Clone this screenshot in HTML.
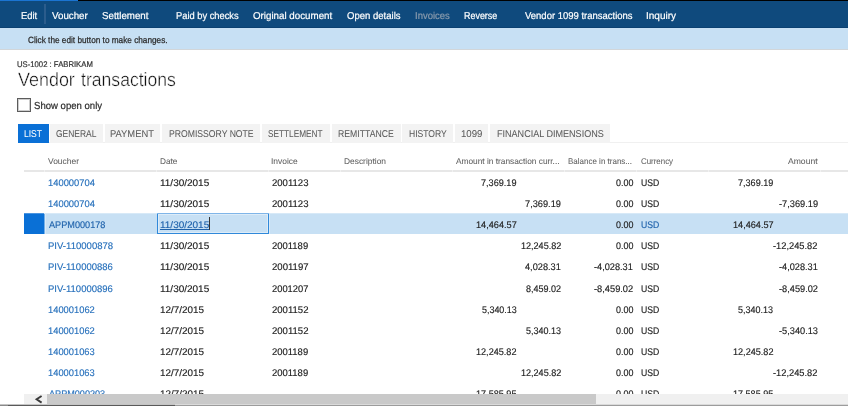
<!DOCTYPE html><html><head><meta charset="utf-8"><title>Vendor transactions</title><style>
html,body{margin:0;padding:0;background:#fff;}
body{width:848px;height:406px;position:relative;overflow:hidden;font-family:"Liberation Sans", sans-serif;}
.t{position:absolute;white-space:pre;line-height:14px;font-family:"Liberation Sans", sans-serif;text-rendering:geometricPrecision;transform-origin:0 0;}
.b{position:absolute;}

</style></head><body>
<div class="b" style="left:0;top:0;width:848px;height:28px;background:#0f4a7d"></div>
<div class="b" style="left:0;top:0;width:77.5px;height:1px;background:#1b74d1"></div>
<div class="b" style="left:77.5px;top:0;width:770.5px;height:1px;background:#000"></div>
<div class="b" style="left:44px;top:4px;width:2px;height:20px;background:#2b5c8c"></div>
<div class="b" style="left:0;top:27px;width:848px;height:1px;background:#0b4172"></div>
<div class="b" style="left:0;top:28px;width:848px;height:21px;background:#c7e0f4"></div>
<div class="b" style="left:0;top:48.8px;width:848px;height:1px;background:#d2d6d9"></div>
<div class="b" style="left:17px;top:98px;width:12px;height:12px;border:1px solid #5c5c5c;box-shadow:inset 0 0 0 1px rgba(90,90,90,.3);background:#fff"></div>
<div class="b" style="left:18px;top:142px;width:830px;height:1px;background:#f0f0f0"></div>
<div class="b" style="left:18px;top:123.7px;width:30.50px;height:19.4px;background:#0a70d6"></div>
<div class="b" style="left:50.2px;top:123.7px;width:52.80px;height:19.4px;background:#f3f3f3"></div>
<div class="b" style="left:104.8px;top:123.7px;width:55.20px;height:19.4px;background:#f3f3f3"></div>
<div class="b" style="left:161.75px;top:123.7px;width:97.75px;height:19.4px;background:#f3f3f3"></div>
<div class="b" style="left:261.5px;top:123.7px;width:68.25px;height:19.4px;background:#f3f3f3"></div>
<div class="b" style="left:331.5px;top:123.7px;width:69.00px;height:19.4px;background:#f3f3f3"></div>
<div class="b" style="left:402.25px;top:123.7px;width:50.25px;height:19.4px;background:#f3f3f3"></div>
<div class="b" style="left:454.5px;top:123.7px;width:33.75px;height:19.4px;background:#f3f3f3"></div>
<div class="b" style="left:490px;top:123.7px;width:120.00px;height:19.4px;background:#f3f3f3"></div>
<div class="b" style="left:24px;top:170px;width:824px;height:2px;background:#e7e7e7"></div>
<div class="b" style="left:44.0px;top:170px;width:1px;height:2px;background:#f1f1f1"></div>
<div class="b" style="left:156.0px;top:170px;width:1px;height:2px;background:#f1f1f1"></div>
<div class="b" style="left:268.0px;top:170px;width:1px;height:2px;background:#f1f1f1"></div>
<div class="b" style="left:340.0px;top:170px;width:1px;height:2px;background:#f1f1f1"></div>
<div class="b" style="left:452.0px;top:170px;width:1px;height:2px;background:#f1f1f1"></div>
<div class="b" style="left:564.0px;top:170px;width:1px;height:2px;background:#f1f1f1"></div>
<div class="b" style="left:636.0px;top:170px;width:1px;height:2px;background:#f1f1f1"></div>
<div class="b" style="left:708.0px;top:170px;width:1px;height:2px;background:#f1f1f1"></div>
<div class="b" style="left:820.0px;top:170px;width:1px;height:2px;background:#f1f1f1"></div>
<div class="b" style="left:24px;top:213px;width:824px;height:1px;background:#d7e9f7"></div>
<div class="b" style="left:24px;top:214px;width:824px;height:20px;background:#c7e0f4"></div>
<div class="b" style="left:24px;top:213px;width:20px;height:1px;background:#4a94e0"></div>
<div class="b" style="left:24px;top:214px;width:20px;height:20px;background:#0a70d6"></div>
<div class="b" style="left:44px;top:214px;width:1px;height:20px;background:#74b0e8"></div>
<div class="b" style="left:45px;top:214px;width:1px;height:20px;background:#d9eaf8"></div>
<div class="b" style="left:157px;top:213px;width:109.5px;height:19px;border:1px solid #3089da;box-shadow:inset 0 0 0 1px rgba(255,255,255,.4);background:#c7e0f4"></div>
<div class="b" style="left:157px;top:213px;width:111.5px;height:1px;background:#7fb5e8"></div>
<div class="b" style="left:269px;top:214px;width:1px;height:20px;background:#d9eaf8"></div>
<div class="b" style="left:209px;top:217.4px;width:1px;height:12.2px;background:#333"></div>
<div class="b" style="left:0;top:0;width:848px;height:406px;will-change:transform">
<span class="t" style="left:21.20px;top:10px;font-size:10px;color:#fff;transform:scaleX(0.9400);-webkit-text-stroke:0.2px #fff;">Edit</span>
<span class="t" style="left:52.10px;top:10px;font-size:10px;color:#fff;transform:scaleX(0.9754);-webkit-text-stroke:0.2px #fff;">Voucher</span>
<span class="t" style="left:102.39px;top:10px;font-size:10px;color:#fff;transform:scaleX(0.9722);-webkit-text-stroke:0.2px #fff;">Settlement</span>
<span class="t" style="left:176.27px;top:10px;font-size:10px;color:#fff;transform:scaleX(0.9319);-webkit-text-stroke:0.2px #fff;">Paid by checks</span>
<span class="t" style="left:252.53px;top:10px;font-size:10px;color:#fff;transform:scaleX(0.9765);-webkit-text-stroke:0.2px #fff;">Original document</span>
<span class="t" style="left:346.57px;top:10px;font-size:10px;color:#fff;transform:scaleX(0.9534);-webkit-text-stroke:0.2px #fff;">Open details</span>
<span class="t" style="left:415.08px;top:10px;font-size:10px;color:#8a9bad;transform:scaleX(0.9490);-webkit-text-stroke:0.2px #8a9bad;">Invoices</span>
<span class="t" style="left:464.10px;top:10px;font-size:10px;color:#fff;transform:scaleX(0.8940);-webkit-text-stroke:0.2px #fff;">Reverse</span>
<span class="t" style="left:524.64px;top:10px;font-size:10px;color:#fff;transform:scaleX(0.9484);-webkit-text-stroke:0.2px #fff;">Vendor 1099 transactions</span>
<span class="t" style="left:646.18px;top:10px;font-size:10px;color:#fff;transform:scaleX(0.9996);-webkit-text-stroke:0.2px #fff;">Inquiry</span>
<span class="t" style="left:27.60px;top:33px;font-size:9px;color:#2b2b2b;transform:scaleX(0.9148);-webkit-text-stroke:0.25px #2b2b2b;">Click the edit button to make changes.</span>
<span class="t" style="left:17.37px;top:58px;font-size:8.2px;color:#333;transform:scaleX(0.9415);-webkit-text-stroke:0.2px #333;">US-1002 : FABRIKAM</span>
<span class="t" style="left:17.50px;top:74px;font-size:19.2px;color:#111;transform:scaleX(0.9347);-webkit-text-stroke:0.4px #fff;">Vendor</span>
<span class="t" style="left:81.10px;top:74px;font-size:19.2px;color:#111;transform:scaleX(0.9173);-webkit-text-stroke:0.4px #fff;">transactions</span>
<span class="t" style="left:34.00px;top:100px;font-size:10.2px;color:#2b2b2b;transform:scaleX(0.9393);-webkit-text-stroke:0.2px #2b2b2b;">Show open only</span>
<span class="t" style="left:24.10px;top:128px;font-size:9.9px;color:#fff;transform:scaleX(0.8629);-webkit-text-stroke:0.05px #fff;">LIST</span>
<span class="t" style="left:56.41px;top:128px;font-size:9.9px;color:#5a5a5a;transform:scaleX(0.8550);-webkit-text-stroke:0.05px #5a5a5a;">GENERAL</span>
<span class="t" style="left:110.15px;top:128px;font-size:9.9px;color:#5a5a5a;transform:scaleX(0.9479);-webkit-text-stroke:0.05px #5a5a5a;">PAYMENT</span>
<span class="t" style="left:168.66px;top:128px;font-size:9.9px;color:#5a5a5a;transform:scaleX(0.8746);-webkit-text-stroke:0.05px #5a5a5a;">PROMISSORY NOTE</span>
<span class="t" style="left:268.35px;top:128px;font-size:9.9px;color:#5a5a5a;transform:scaleX(0.8354);-webkit-text-stroke:0.05px #5a5a5a;">SETTLEMENT</span>
<span class="t" style="left:338.10px;top:128px;font-size:9.9px;color:#5a5a5a;transform:scaleX(0.8792);-webkit-text-stroke:0.05px #5a5a5a;">REMITTANCE</span>
<span class="t" style="left:408.85px;top:128px;font-size:9.9px;color:#5a5a5a;transform:scaleX(0.8680);-webkit-text-stroke:0.05px #5a5a5a;">HISTORY</span>
<span class="t" style="left:461.34px;top:128px;font-size:9.9px;color:#5a5a5a;transform:scaleX(0.9755);-webkit-text-stroke:0.05px #5a5a5a;">1099</span>
<span class="t" style="left:496.85px;top:128px;font-size:9.9px;color:#5a5a5a;transform:scaleX(0.9166);-webkit-text-stroke:0.05px #5a5a5a;">FINANCIAL DIMENSIONS</span>
<span class="t" style="left:48.34px;top:154px;font-size:8.3px;color:#606060;transform:scaleX(1.0171);-webkit-text-stroke:0.05px #606060;">Voucher</span>
<span class="t" style="left:160.26px;top:154px;font-size:8.3px;color:#606060;transform:scaleX(0.9953);-webkit-text-stroke:0.05px #606060;">Date</span>
<span class="t" style="left:271.14px;top:154px;font-size:8.3px;color:#606060;transform:scaleX(1.0176);-webkit-text-stroke:0.05px #606060;">Invoice</span>
<span class="t" style="left:344.40px;top:154px;font-size:8.3px;color:#606060;transform:scaleX(1.0113);-webkit-text-stroke:0.05px #606060;">Description</span>
<span class="t" style="left:456.48px;top:154px;font-size:8.3px;color:#606060;transform:scaleX(1.0023);-webkit-text-stroke:0.05px #606060;">Amount in transaction curr...</span>
<span class="t" style="left:568.22px;top:154px;font-size:8.3px;color:#606060;transform:scaleX(0.9636);-webkit-text-stroke:0.05px #606060;">Balance in trans...</span>
<span class="t" style="left:640.85px;top:154px;font-size:8.3px;color:#606060;transform:scaleX(0.9518);-webkit-text-stroke:0.05px #606060;">Currency</span>
<span class="t" style="left:788.10px;top:154px;font-size:8.3px;color:#606060;transform:scaleX(1.0334);-webkit-text-stroke:0.05px #606060;">Amount</span>
<span class="t" style="left:48.38px;top:177px;font-size:9.6px;color:#2871bc;transform:scaleX(0.9765);-webkit-text-stroke:0.15px #2871bc;">140000704</span>
<span class="t" style="left:160.41px;top:177px;font-size:9.6px;color:#222222;transform:scaleX(1.0407);-webkit-text-stroke:0.15px #222222;">11/30/2015</span>
<span class="t" style="left:272.21px;top:177px;font-size:9.6px;color:#222222;transform:scaleX(0.9948);-webkit-text-stroke:0.15px #222222;">2001123</span>
<span class="t" style="left:481.38px;top:177px;font-size:9.6px;color:#222222;transform:scaleX(0.9495);-webkit-text-stroke:0.15px #222222;">7,369.19</span>
<span class="t" style="left:615.57px;top:177px;font-size:9.6px;color:#222222;transform:scaleX(0.9302);-webkit-text-stroke:0.15px #222222;">0.00</span>
<span class="t" style="left:640.85px;top:177px;font-size:9.6px;color:#222222;transform:scaleX(0.9030);-webkit-text-stroke:0.15px #222222;">USD</span>
<span class="t" style="left:738.10px;top:177px;font-size:9.6px;color:#222222;transform:scaleX(0.9449);-webkit-text-stroke:0.15px #222222;">7,369.19</span>
<span class="t" style="left:48.38px;top:198px;font-size:9.6px;color:#2871bc;transform:scaleX(0.9765);-webkit-text-stroke:0.15px #2871bc;">140000704</span>
<span class="t" style="left:160.41px;top:198px;font-size:9.6px;color:#222222;transform:scaleX(1.0407);-webkit-text-stroke:0.15px #222222;">11/30/2015</span>
<span class="t" style="left:272.21px;top:198px;font-size:9.6px;color:#222222;transform:scaleX(0.9948);-webkit-text-stroke:0.15px #222222;">2001123</span>
<span class="t" style="left:525.37px;top:198px;font-size:9.6px;color:#222222;transform:scaleX(0.9620);-webkit-text-stroke:0.15px #222222;">7,369.19</span>
<span class="t" style="left:615.57px;top:198px;font-size:9.6px;color:#222222;transform:scaleX(0.9302);-webkit-text-stroke:0.15px #222222;">0.00</span>
<span class="t" style="left:640.85px;top:198px;font-size:9.6px;color:#222222;transform:scaleX(0.9030);-webkit-text-stroke:0.15px #222222;">USD</span>
<span class="t" style="left:778.60px;top:198px;font-size:9.6px;color:#222222;transform:scaleX(0.9631);-webkit-text-stroke:0.15px #222222;">-7,369.19</span>
<span class="t" style="left:48.86px;top:219px;font-size:9.6px;color:#1f62ab;transform:scaleX(0.9522);-webkit-text-stroke:0.15px #1f62ab;">APPM000178</span>
<span class="t" style="left:160.41px;top:219px;font-size:9.6px;color:#1f62ab;transform:scaleX(1.0407);text-decoration:underline;text-decoration-thickness:0.8px;-webkit-text-stroke:0.15px #1f62ab;">11/30/2015</span>
<span class="t" style="left:476.12px;top:219px;font-size:9.6px;color:#222222;transform:scaleX(0.9563);-webkit-text-stroke:0.15px #222222;">14,464.57</span>
<span class="t" style="left:615.57px;top:219px;font-size:9.6px;color:#222222;transform:scaleX(0.9302);-webkit-text-stroke:0.15px #222222;">0.00</span>
<span class="t" style="left:640.85px;top:219px;font-size:9.6px;color:#1f62ab;transform:scaleX(0.9030);-webkit-text-stroke:0.15px #1f62ab;">USD</span>
<span class="t" style="left:733.43px;top:219px;font-size:9.6px;color:#222222;transform:scaleX(0.9521);-webkit-text-stroke:0.15px #222222;">14,464.57</span>
<span class="t" style="left:48.25px;top:240px;font-size:9.6px;color:#2871bc;transform:scaleX(0.9957);-webkit-text-stroke:0.15px #2871bc;">PIV-110000878</span>
<span class="t" style="left:160.41px;top:240px;font-size:9.6px;color:#222222;transform:scaleX(1.0407);-webkit-text-stroke:0.15px #222222;">11/30/2015</span>
<span class="t" style="left:272.14px;top:240px;font-size:9.6px;color:#222222;transform:scaleX(0.9864);-webkit-text-stroke:0.15px #222222;">2001189</span>
<span class="t" style="left:521.14px;top:240px;font-size:9.6px;color:#222222;transform:scaleX(0.9439);-webkit-text-stroke:0.15px #222222;">12,245.82</span>
<span class="t" style="left:615.57px;top:240px;font-size:9.6px;color:#222222;transform:scaleX(0.9302);-webkit-text-stroke:0.15px #222222;">0.00</span>
<span class="t" style="left:640.85px;top:240px;font-size:9.6px;color:#222222;transform:scaleX(0.9030);-webkit-text-stroke:0.15px #222222;">USD</span>
<span class="t" style="left:773.47px;top:240px;font-size:9.6px;color:#222222;transform:scaleX(0.9666);-webkit-text-stroke:0.15px #222222;">-12,245.82</span>
<span class="t" style="left:48.33px;top:261px;font-size:9.6px;color:#2871bc;transform:scaleX(0.9916);-webkit-text-stroke:0.15px #2871bc;">PIV-110000886</span>
<span class="t" style="left:160.41px;top:261px;font-size:9.6px;color:#222222;transform:scaleX(1.0407);-webkit-text-stroke:0.15px #222222;">11/30/2015</span>
<span class="t" style="left:272.34px;top:261px;font-size:9.6px;color:#222222;transform:scaleX(0.9981);-webkit-text-stroke:0.15px #222222;">2001197</span>
<span class="t" style="left:525.30px;top:261px;font-size:9.6px;color:#222222;transform:scaleX(0.9578);-webkit-text-stroke:0.15px #222222;">4,028.31</span>
<span class="t" style="left:594.15px;top:261px;font-size:9.6px;color:#222222;transform:scaleX(0.9573);-webkit-text-stroke:0.15px #222222;">-4,028.31</span>
<span class="t" style="left:640.85px;top:261px;font-size:9.6px;color:#222222;transform:scaleX(0.9030);-webkit-text-stroke:0.15px #222222;">USD</span>
<span class="t" style="left:778.85px;top:261px;font-size:9.6px;color:#222222;transform:scaleX(0.9569);-webkit-text-stroke:0.15px #222222;">-4,028.31</span>
<span class="t" style="left:48.33px;top:283px;font-size:9.6px;color:#2871bc;transform:scaleX(0.9916);-webkit-text-stroke:0.15px #2871bc;">PIV-110000896</span>
<span class="t" style="left:160.41px;top:283px;font-size:9.6px;color:#222222;transform:scaleX(1.0407);-webkit-text-stroke:0.15px #222222;">11/30/2015</span>
<span class="t" style="left:272.21px;top:283px;font-size:9.6px;color:#222222;transform:scaleX(0.9743);-webkit-text-stroke:0.15px #222222;">2001207</span>
<span class="t" style="left:525.58px;top:283px;font-size:9.6px;color:#222222;transform:scaleX(0.9404);-webkit-text-stroke:0.15px #222222;">8,459.02</span>
<span class="t" style="left:594.48px;top:283px;font-size:9.6px;color:#222222;transform:scaleX(0.9661);-webkit-text-stroke:0.15px #222222;">-8,459.02</span>
<span class="t" style="left:640.85px;top:283px;font-size:9.6px;color:#222222;transform:scaleX(0.9030);-webkit-text-stroke:0.15px #222222;">USD</span>
<span class="t" style="left:778.64px;top:283px;font-size:9.6px;color:#222222;transform:scaleX(0.9621);-webkit-text-stroke:0.15px #222222;">-8,459.02</span>
<span class="t" style="left:48.47px;top:304px;font-size:9.6px;color:#2871bc;transform:scaleX(0.9749);-webkit-text-stroke:0.15px #2871bc;">140001062</span>
<span class="t" style="left:160.34px;top:304px;font-size:9.6px;color:#222222;transform:scaleX(1.0292);-webkit-text-stroke:0.15px #222222;">12/7/2015</span>
<span class="t" style="left:272.33px;top:304px;font-size:9.6px;color:#222222;transform:scaleX(0.9949);-webkit-text-stroke:0.15px #222222;">2001152</span>
<span class="t" style="left:481.67px;top:304px;font-size:9.6px;color:#222222;transform:scaleX(0.9305);-webkit-text-stroke:0.15px #222222;">5,340.13</span>
<span class="t" style="left:615.57px;top:304px;font-size:9.6px;color:#222222;transform:scaleX(0.9302);-webkit-text-stroke:0.15px #222222;">0.00</span>
<span class="t" style="left:640.85px;top:304px;font-size:9.6px;color:#222222;transform:scaleX(0.9030);-webkit-text-stroke:0.15px #222222;">USD</span>
<span class="t" style="left:738.35px;top:304px;font-size:9.6px;color:#222222;transform:scaleX(0.9341);-webkit-text-stroke:0.15px #222222;">5,340.13</span>
<span class="t" style="left:48.47px;top:325px;font-size:9.6px;color:#2871bc;transform:scaleX(0.9749);-webkit-text-stroke:0.15px #2871bc;">140001062</span>
<span class="t" style="left:160.34px;top:325px;font-size:9.6px;color:#222222;transform:scaleX(1.0292);-webkit-text-stroke:0.15px #222222;">12/7/2015</span>
<span class="t" style="left:272.33px;top:325px;font-size:9.6px;color:#222222;transform:scaleX(0.9949);-webkit-text-stroke:0.15px #222222;">2001152</span>
<span class="t" style="left:526.43px;top:325px;font-size:9.6px;color:#222222;transform:scaleX(0.9341);-webkit-text-stroke:0.15px #222222;">5,340.13</span>
<span class="t" style="left:615.57px;top:325px;font-size:9.6px;color:#222222;transform:scaleX(0.9302);-webkit-text-stroke:0.15px #222222;">0.00</span>
<span class="t" style="left:640.85px;top:325px;font-size:9.6px;color:#222222;transform:scaleX(0.9030);-webkit-text-stroke:0.15px #222222;">USD</span>
<span class="t" style="left:778.64px;top:325px;font-size:9.6px;color:#222222;transform:scaleX(0.9621);-webkit-text-stroke:0.15px #222222;">-5,340.13</span>
<span class="t" style="left:48.13px;top:346px;font-size:9.6px;color:#2871bc;transform:scaleX(0.9724);-webkit-text-stroke:0.15px #2871bc;">140001063</span>
<span class="t" style="left:160.34px;top:346px;font-size:9.6px;color:#222222;transform:scaleX(1.0292);-webkit-text-stroke:0.15px #222222;">12/7/2015</span>
<span class="t" style="left:272.14px;top:346px;font-size:9.6px;color:#222222;transform:scaleX(0.9864);-webkit-text-stroke:0.15px #222222;">2001189</span>
<span class="t" style="left:476.07px;top:346px;font-size:9.6px;color:#222222;transform:scaleX(0.9476);-webkit-text-stroke:0.15px #222222;">12,245.82</span>
<span class="t" style="left:615.57px;top:346px;font-size:9.6px;color:#222222;transform:scaleX(0.9302);-webkit-text-stroke:0.15px #222222;">0.00</span>
<span class="t" style="left:640.85px;top:346px;font-size:9.6px;color:#222222;transform:scaleX(0.9030);-webkit-text-stroke:0.15px #222222;">USD</span>
<span class="t" style="left:733.23px;top:346px;font-size:9.6px;color:#222222;transform:scaleX(0.9476);-webkit-text-stroke:0.15px #222222;">12,245.82</span>
<span class="t" style="left:48.13px;top:367px;font-size:9.6px;color:#2871bc;transform:scaleX(0.9724);-webkit-text-stroke:0.15px #2871bc;">140001063</span>
<span class="t" style="left:160.34px;top:367px;font-size:9.6px;color:#222222;transform:scaleX(1.0292);-webkit-text-stroke:0.15px #222222;">12/7/2015</span>
<span class="t" style="left:272.14px;top:367px;font-size:9.6px;color:#222222;transform:scaleX(0.9864);-webkit-text-stroke:0.15px #222222;">2001189</span>
<span class="t" style="left:521.14px;top:367px;font-size:9.6px;color:#222222;transform:scaleX(0.9439);-webkit-text-stroke:0.15px #222222;">12,245.82</span>
<span class="t" style="left:615.57px;top:367px;font-size:9.6px;color:#222222;transform:scaleX(0.9302);-webkit-text-stroke:0.15px #222222;">0.00</span>
<span class="t" style="left:640.85px;top:367px;font-size:9.6px;color:#222222;transform:scaleX(0.9030);-webkit-text-stroke:0.15px #222222;">USD</span>
<span class="t" style="left:773.47px;top:367px;font-size:9.6px;color:#222222;transform:scaleX(0.9666);-webkit-text-stroke:0.15px #222222;">-12,245.82</span>
<span class="t" style="left:48.82px;top:388px;font-size:9.6px;color:#2871bc;transform:scaleX(0.9488);-webkit-text-stroke:0.15px #2871bc;">APPM000203</span>
<span class="t" style="left:160.34px;top:388px;font-size:9.6px;color:#222222;transform:scaleX(1.0292);-webkit-text-stroke:0.15px #222222;">12/7/2015</span>
<span class="t" style="left:476.32px;top:388px;font-size:9.6px;color:#222222;transform:scaleX(0.9474);-webkit-text-stroke:0.15px #222222;">17,585.95</span>
<span class="t" style="left:615.57px;top:388px;font-size:9.6px;color:#222222;transform:scaleX(0.9302);-webkit-text-stroke:0.15px #222222;">0.00</span>
<span class="t" style="left:640.85px;top:388px;font-size:9.6px;color:#222222;transform:scaleX(0.9030);-webkit-text-stroke:0.15px #222222;">USD</span>
<span class="t" style="left:733.49px;top:388px;font-size:9.6px;color:#222222;transform:scaleX(0.9426);-webkit-text-stroke:0.15px #222222;">17,585.95</span>
</div>
<div class="b" style="left:0;top:394.2px;width:848px;height:12px;background:#fff"></div>
<div class="b" style="left:24.2px;top:394.2px;width:823.8px;height:9.6px;background:#f0f0f0"></div>
<div class="b" style="left:47.2px;top:394.2px;width:548.6px;height:9.6px;background:#c9c9c9"></div>
<svg class="b" style="left:24px;top:394px" width="24" height="10" viewBox="0 0 24 10"><path d="M17.6 2 L12.6 5.3 L17.6 8.6" fill="none" stroke="#3a3a3a" stroke-width="1.9"/></svg>
<div class="b" style="left:0;top:404px;width:848px;height:1px;background:#dadada"></div>
<div class="b" style="left:0;top:404px;width:175px;height:1px;background:#c4c4c4"></div>
<div class="b" style="left:0;top:405px;width:848px;height:1px;background:#9c9c9c"></div>
<div class="b" style="left:0;top:405px;width:175px;height:1px;background:#5a5a5a"></div>
<div class="b" style="left:0;top:405px;width:8px;height:1px;background:#8a8a8a"></div>
</body></html>
